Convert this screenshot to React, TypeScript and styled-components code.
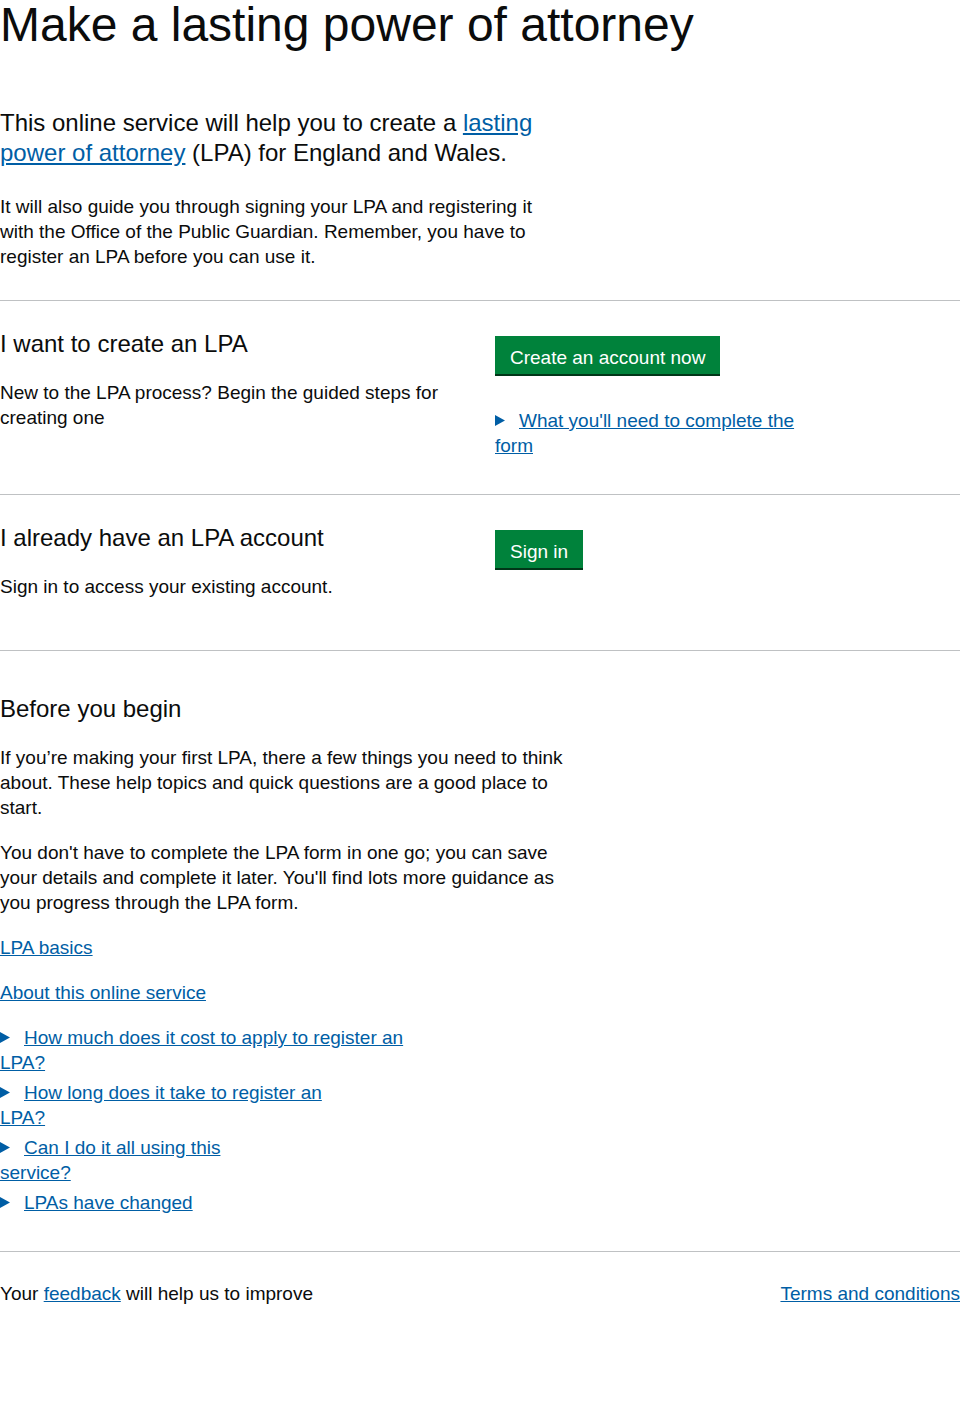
import styled, { createGlobalStyle } from "styled-components";

const GlobalStyle = createGlobalStyle`
  html, body {
    margin: 0;
    padding: 0;
    background: #ffffff;
  }
  body {
    font-family: "Liberation Sans", Arial, Helvetica, sans-serif;
    color: #0b0c0c;
  }
`;

const Page = styled.main`
  width: 960px;
`;

const Title = styled.h1`
  margin: 0;
  font-size: 48px;
  line-height: 50px;
  font-weight: 400;
`;

const Lede = styled.p`
  margin: 58px 0 0;
  width: 570px;
  font-size: 24px;
  line-height: 30px;
`;

const Body = styled.p<{ $top?: number }>`
  margin: ${(p) => p.$top ?? 20}px 0 0;
  max-width: 570px;
  font-size: 19px;
  line-height: 25px;
`;

const Link = styled.a`
  color: #005ea5;
  text-decoration: underline;
  cursor: pointer;
`;

const Section = styled.section<{ $pad: string; $top?: number }>`
  margin-top: ${(p) => p.$top ?? 0}px;
  border-top: 1px solid #bfc1c3;
  padding: ${(p) => p.$pad};
`;

const Row = styled.div`
  display: grid;
  grid-template-columns: 465px 465px;
  column-gap: 30px;
  align-items: start;
`;

const Heading = styled.h2`
  margin: 0;
  font-size: 24px;
  line-height: 30px;
  font-weight: 400;
`;

const Column = styled.div`
  display: flex;
  flex-direction: column;
  align-items: flex-start;
`;

const Button = styled.a`
  display: inline-block;
  margin-top: 7px;
  padding: 10px 15px 5px;
  font-size: 19px;
  line-height: 23px;
  color: #ffffff;
  background: #00823b;
  box-shadow: 0 2px 0 #003618;
  text-decoration: none;
  cursor: pointer;
`;

const Details = styled.div<{ $top?: number; $width?: number; $bottom?: number }>`
  margin-top: ${(p) => p.$top ?? 5}px;
  margin-bottom: ${(p) => p.$bottom ?? 0}px;
  width: ${(p) => (p.$width ? `${p.$width}px` : "auto")};
  font-size: 19px;
  line-height: 25px;
  color: #005ea5;
`;

const Arrow = styled.svg`
  display: inline-block;
  width: 10px;
  height: 11px;
  margin-right: 14px;
  vertical-align: 1px;
`;

const Footer = styled.footer`
  border-top: 1px solid #bfc1c3;
  padding: 29px 0 100px;
  display: flex;
  justify-content: space-between;
  font-size: 19px;
  line-height: 25px;
`;

const questions = [
  ["How much does it cost to apply to register an", "LPA?"],
  ["How long does it take to register an", "LPA?"],
  ["Can I do it all using this", "service?"],
  ["LPAs have changed"],
];

const Triangle = () => (
  <Arrow viewBox="0 0 10 11" aria-hidden="true">
    <polygon points="0,0 10,5.5 0,11" fill="#005ea5" />
  </Arrow>
);

export default function App() {
  return (
    <Page>
      <GlobalStyle />
      <Title>Make a lasting power of attorney</Title>
      <Lede>
        This online service will help you to create a <Link>lasting power of attorney</Link> (LPA) for
        England and Wales.
      </Lede>
      <Body $top={26}>
        It will also guide you through signing your LPA and registering it with the Office of the
        Public Guardian. Remember, you have to register an LPA before you can use it.
      </Body>

      <Section $pad="28px 0 0" $top={31}>
        <Row>
          <Column>
            <Heading>I want to create an LPA</Heading>
            <Body $top={21}>New to the LPA process? Begin the guided steps for creating one</Body>
          </Column>
          <Column>
            <Button>Create an account now</Button>
            <Details $top={34} $width={310} $bottom={36}>
              <Triangle />
              <Link>What you'll need to complete the form</Link>
            </Details>
          </Column>
        </Row>
      </Section>

      <Section $pad="28px 0 51px">
        <Row>
          <Column>
            <Heading>I already have an LPA account</Heading>
            <Body $top={21}>Sign in to access your existing account.</Body>
          </Column>
          <Column>
            <Button>Sign in</Button>
          </Column>
        </Row>
      </Section>

      <Section $pad="43px 0 36px">
        <Heading>Before you begin</Heading>
        <Body $top={21}>
          If you’re making your first LPA, there a few things you need to think about. These help
          topics and quick questions are a good place to start.
        </Body>
        <Body>
          You don't have to complete the LPA form in one go; you can save your details and complete
          it later. You'll find lots more guidance as you progress through the LPA form.
        </Body>
        <Body>
          <Link>LPA basics</Link>
        </Body>
        <Body>
          <Link>About this online service</Link>
        </Body>
        {questions.map((q, i) => (
          <Details key={q[0]} $top={i === 0 ? 20 : 5}>
            <Triangle />
            <Link>
              {q[0]}
              {q[1] && (
                <>
                  <br />
                  {q[1]}
                </>
              )}
            </Link>
          </Details>
        ))}
      </Section>

      <Footer>
        <span>
          Your <Link>feedback</Link> will help us to improve
        </span>
        <Link>Terms and conditions</Link>
      </Footer>
    </Page>
  );
}
